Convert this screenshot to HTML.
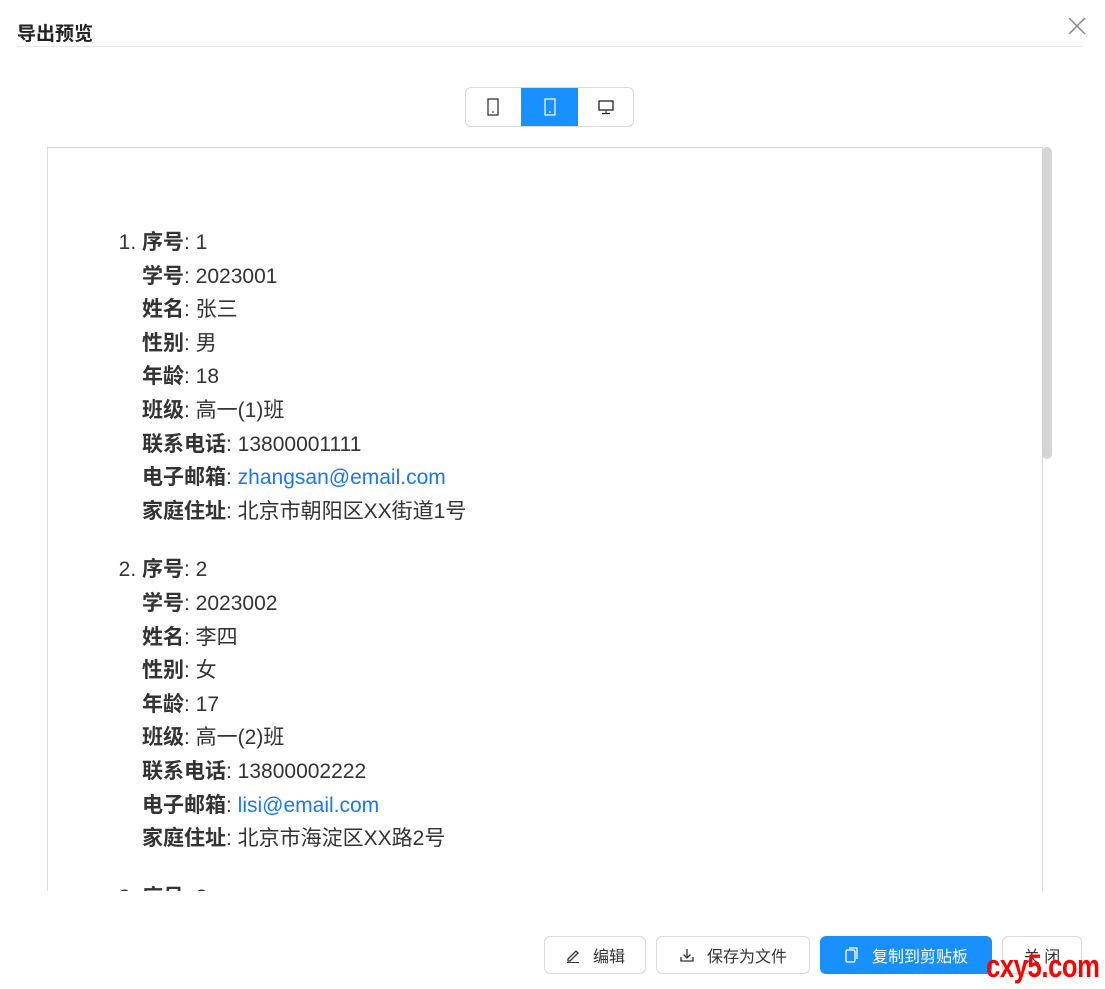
<!DOCTYPE html>
<html><head><meta charset="utf-8"><style>
body{margin:0;width:1105px;height:989px;background:#fff;font-family:"Liberation Sans","Noto Sans CJK SC",sans-serif;position:relative;overflow:hidden;color:#333}
.title{position:absolute;left:17px;top:19px;font-size:19px;font-weight:bold;color:#222}
.hr{position:absolute;left:17px;top:46px;width:1065px;height:1px;background:#e8e8e8}
.x{position:absolute;left:1068px;top:17px}
.seg{position:absolute;left:465px;top:87px;width:167px;height:38px;border:1px solid #d9d9d9;border-radius:6px;overflow:hidden;display:flex}
.seg div{width:55px;height:38px;display:flex;align-items:center;justify-content:center}
.seg .on{background:#1890ff;width:58px}
.box{position:absolute;left:47px;top:147px;width:994px;height:743px;border:1px solid #d9d9d9;border-bottom:none;overflow:hidden}
.sb{position:absolute;left:1042px;top:147px;width:10px;height:312px;background:#d4d4d4;border-radius:5px}
ol{margin:0;padding:0 0 0 94px;position:absolute;top:78px;font-size:21px;line-height:33.6px;color:#333}
li{margin-bottom:25px;padding-left:0}
b{font-weight:bold}
a{color:#1677ff;text-decoration:none}
.btn{position:absolute;top:936px;height:38px;border:1px solid #d9d9d9;border-radius:6px;box-sizing:border-box;display:flex;align-items:center;justify-content:center;font-size:16px;color:#333;gap:12px;background:#fff}
.pri{background:#1890ff;border-color:#1890ff;color:#fff}
.wm{position:absolute;left:986px;top:948px;font-size:32px;font-weight:bold;color:#f00;font-family:"Liberation Sans",sans-serif;transform:scaleX(0.8);transform-origin:left top;letter-spacing:-0.5px}
</style></head><body>
<div class="title">导出预览</div>
<div class="hr"></div>
<div class="x"><svg width="18" height="18"><path d="M1 1 L17 17 M17 1 L1 17" stroke="#888" stroke-width="1.5"/></svg></div>
<div class="seg">
<div><svg width="12" height="18"><rect x="1" y="1" width="10" height="16" fill="none" stroke="#222" stroke-width="1.2"/><line x1="6" y1="13" x2="6" y2="15" stroke="#222"/></svg></div>
<div class="on"><svg width="12" height="18"><rect x="1" y="1" width="10" height="16" fill="none" stroke="#fff" stroke-width="1.2"/><line x1="6" y1="13" x2="6" y2="15" stroke="#fff"/></svg></div>
<div><svg width="16" height="16"><rect x="1" y="2" width="14" height="9" fill="none" stroke="#222" stroke-width="1.3"/><line x1="8" y1="11" x2="8" y2="14" stroke="#222"/><line x1="4" y1="14.5" x2="12" y2="14.5" stroke="#222" stroke-width="1.3"/></svg></div>
</div>
<div class="box"><ol>
<li><b>序号</b>: 1<br><b>学号</b>: 2023001<br><b>姓名</b>: 张三<br><b>性别</b>: 男<br><b>年龄</b>: 18<br><b>班级</b>: 高一(1)班<br><b>联系电话</b>: 13800001111<br><b>电子邮箱</b>: <a>zhangsan@email.com</a><br><b>家庭住址</b>: 北京市朝阳区XX街道1号</li>
<li><b>序号</b>: 2<br><b>学号</b>: 2023002<br><b>姓名</b>: 李四<br><b>性别</b>: 女<br><b>年龄</b>: 17<br><b>班级</b>: 高一(2)班<br><b>联系电话</b>: 13800002222<br><b>电子邮箱</b>: <a>lisi@email.com</a><br><b>家庭住址</b>: 北京市海淀区XX路2号</li>
<li><b>序号</b>: 3<br><b>学号</b>: 2023003</li>
</ol></div>
<div class="sb"></div>
<div class="btn" style="left:544px;width:102px"><svg width="16" height="16"><path d="M3 12 L11 4 L13 6 L5 14 L3 14 Z" fill="none" stroke="#333" stroke-width="1.3"/><line x1="2" y1="15.5" x2="14" y2="15.5" stroke="#333"/></svg>编辑</div>
<div class="btn" style="left:656px;width:154px"><svg width="16" height="16"><path d="M8 2 V11 M4.5 7.5 L8 11 L11.5 7.5 M2 10 V14 H14 V10" fill="none" stroke="#333" stroke-width="1.3"/></svg>保存为文件</div>
<div class="btn pri" style="left:820px;width:172px"><svg width="16" height="18"><rect x="2" y="4" width="9" height="12" rx="1.5" fill="none" stroke="#fff" stroke-width="1.3"/><path d="M5 2 H13 V13" fill="none" stroke="#fff" stroke-width="1.3"/></svg>复制到剪贴板</div>
<div class="btn" style="left:1002px;width:80px">关 闭</div>
<div class="wm">cxy5.com</div>
</body></html>
